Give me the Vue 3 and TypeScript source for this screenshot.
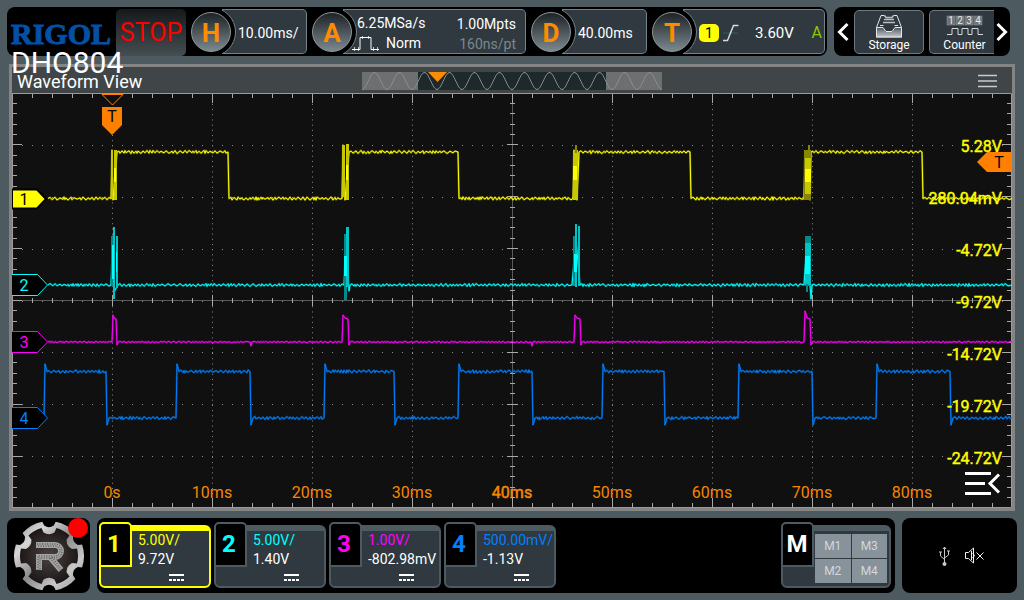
<script setup lang="ts">
type Point = [number, number]
interface Trace { name: string; color: string; d: string }
interface Bar { x: number; y: number; w: number; h: number; fill: string }

const X0 = 12
const X1 = 1012
const Y0 = 93
const Y1 = 508
const CX = 512
const CY = 300

// ---- graticule ----
const columns = [112, 212, 312, 412, 512, 612, 712, 812, 912]
const rows = [145, 197, 249, 301, 352, 404, 456]

function ticksPath(): string {
  let d = ''
  for (let i = 0; i < 50; i++) {
    const x = X0 + i * 20 + 0.5
    const major = i % 5 === 0
    const long = major ? 10 : 5
    const half = major ? 5 : 2
    d += `M${x} ${Y0}v${long}M${x} ${Y1}v${-long}M${x} ${CY - half}v${half * 2 + 1}`
  }
  for (let j = -20; j <= 20; j++) {
    const y = Math.round(CY + j * 10.38) + 0.5
    const major = j % 5 === 0
    const long = major ? 10 : 5
    const half = major ? 5 : 2
    d += `M${X0} ${y}h${long}M${X1} ${y}h${-long}M${CX - half} ${y}h${half * 2 + 1}`
  }
  return d
}
const ticks = ticksPath()

// ---- traces ----
function noiseSource(seed: number): () => number {
  let s = seed
  return () => {
    s = (s * 1103515245 + 12345) % 2147483648
    return s / 2147483648
  }
}

function toPath(nodes: Point[], amp: number, seed: number): string {
  const rnd = noiseSource(seed)
  let d = `M${nodes[0][0]} ${nodes[0][1]}`
  for (let i = 1; i < nodes.length; i++) {
    const [xa, ya] = nodes[i - 1]
    const [xb, yb] = nodes[i]
    if (ya === yb && xb - xa > 6) {
      let up = 1
      for (let x = xa + 2; x < xb - 1; x += 1 + Math.round(rnd() * 2)) {
        up = -up
        const y = ya + up * amp * (0.5 + rnd())
        d += `L${x} ${y.toFixed(1)}`
      }
    }
    d += `L${xb} ${yb}`
  }
  return d
}

const HI1 = 152
const LO1 = 198.5
const ch1: Point[] = [
  [48, LO1], [111, LO1], [112, 150], [113, 200], [117, HI1], [228, HI1], [229, LO1],
  [342, LO1], [343, 145], [345, 200], [349, HI1], [458, HI1], [459, LO1],
  [573, LO1], [574, 150], [577, 200], [579, HI1], [690, HI1], [691, LO1],
  [804, LO1], [805, 151], [810, 200], [811, HI1], [922, HI1], [923, LO1], [1012, LO1],
]
const B2 = 285
const ch2: Point[] = [
  [48, B2], [111, B2], [113, 236], [114, 292], [118, B2], [344, B2], [346, 240], [349, 291], [350, B2],
  [572, B2], [576, 240], [580, B2], [804, B2], [807, 240], [811, 299], [812, B2], [1012, B2],
]
const B3 = 342
const ch3: Point[] = [
  [48, B3], [112, B3], [113, 315], [114, 318], [116, 319], [117, 345], [118, B3],
  [249, B3], [250, B3], [251, 346], [252, B3],
  [342, B3], [343, 315], [345, 318], [348, 319], [349, 345], [350, B3],
  [531, B3], [532, 346], [533, B3], [574, B3], [575, 315], [577, 318], [580, 319], [581, 345], [582, B3],
  [804, B3], [805, 311], [807, 318], [810, 319], [811, 345], [812, B3], [1012, B3],
]
const HI4 = 371.5
const LO4 = 418
const ch4: Point[] = [[44, LO4]]
const edges: Point[] = [[44, 106], [176, 250], [324, 394], [458, 532], [602, 664], [738, 812], [876, 950]]
for (const [rise, fall] of edges) {
  ch4.push([rise, LO4], [rise + 1, 364], [rise + 3, HI4], [fall, HI4], [fall + 1, 425], [fall + 3, LO4])
}
ch4.push([1012, LO4])

const traces: Trace[] = [
  { name: 'ch1', color: '#ffff00', d: toPath(ch1, 1.1, 7) },
  { name: 'ch2', color: '#00ffff', d: toPath(ch2, 1, 31) },
  { name: 'ch3', color: '#ff00ff', d: toPath(ch3, 0.6, 101) },
  { name: 'ch4', color: '#0080ff', d: toPath(ch4, 1.1, 57) },
]

const YD = '#868600'
const YM = '#c8c800'
const YB = '#ffff00'
const CD = '#008a8a'
const CM = '#00c4c4'
const CB = '#00ffff'
const bars: Bar[] = [
  { x: 111, y: 150, w: 2, h: 49, fill: YM },
  { x: 114, y: 150, w: 3, h: 50, fill: YM },
  { x: 114, y: 168, w: 2, h: 14, fill: YB },
  { x: 342, y: 145, w: 3, h: 52, fill: YM },
  { x: 346, y: 144, w: 3, h: 56, fill: YM },
  { x: 346, y: 165, w: 2, h: 15, fill: YB },
  { x: 573, y: 150, w: 5, h: 50, fill: YM },
  { x: 575, y: 145, w: 2, h: 8, fill: YD },
  { x: 573, y: 166, w: 4, h: 14, fill: YB },
  { x: 804, y: 150, w: 7, h: 50, fill: YD },
  { x: 805, y: 158, w: 6, h: 36, fill: YM },
  { x: 805, y: 169, w: 6, h: 13, fill: YB },
  { x: 808, y: 145, w: 2, h: 6, fill: YD },
  { x: 111, y: 236, w: 3, h: 50, fill: CD },
  { x: 113, y: 227, w: 2, h: 72, fill: CM },
  { x: 112, y: 245, w: 2, h: 34, fill: CB },
  { x: 116, y: 236, w: 2, h: 52, fill: CM },
  { x: 116, y: 252, w: 1, h: 20, fill: CB },
  { x: 344, y: 234, w: 3, h: 66, fill: CD },
  { x: 346, y: 227, w: 3, h: 60, fill: CM },
  { x: 344, y: 256, w: 3, h: 20, fill: CB },
  { x: 573, y: 236, w: 2, h: 50, fill: CD },
  { x: 575, y: 224, w: 2, h: 63, fill: CM },
  { x: 578, y: 226, w: 2, h: 60, fill: CM },
  { x: 574, y: 254, w: 3, h: 18, fill: CB },
  { x: 805, y: 236, w: 6, h: 50, fill: CD },
  { x: 805, y: 243, w: 6, h: 42, fill: CM },
  { x: 805, y: 256, w: 5, h: 18, fill: CB },
  { x: 806, y: 284, w: 2, h: 8, fill: CD },
]

const timeLabels = columns.map((x, i) => ({ x, text: i === 0 ? '0s' : `${i * 10}ms`, center: x === CX }))
const voltLabels = ['5.28V', '280.04mV', '-4.72V', '-9.72V', '-14.72V', '-19.72V', '-24.72V']
  .map((text, i) => ({ text, y: 152 + i * 52 }))
const markers = [
  { n: 2, y: 285, color: '#00ffff' },
  { n: 3, y: 342, color: '#ff00ff' },
  { n: 4, y: 418, color: '#0080ff' },
]

// ---- overview strip ----
let overview = 'M0 18'
for (let x = 1; x <= 300; x++) {
  overview += `L${x} ${(9 - 8.5 * Math.cos(((x - 12.5) / 25) * Math.PI * 2)).toFixed(1)}`
}

// ---- gear emblem ----
function gear(outer: number, inner: number, half: number): string {
  const at = (r: number, deg: number) => {
    const a = (deg * Math.PI) / 180
    return `${(r * Math.cos(a)).toFixed(2)} ${(r * Math.sin(a)).toFixed(2)}`
  }
  let d = `M${at(outer, -half)}`
  for (let k = 0; k < 6; k++) {
    const c = k * 60
    d += `A${outer} ${outer} 0 0 1 ${at(outer, c + half)}`
    d += `L${at(inner + 2, c + half + 2)}`
    d += `Q${at(inner - 2, c + 30)} ${at(inner + 2, c + 58 - half)}`
    d += `L${at(outer, c + 60 - half)}`
  }
  return d + 'Z'
}
const gearOuter = gear(35, 29, 19)
const gearInner = gear(29, 22, 15)

const channels = [
  { n: 1, color: '#ffff00', scale: '5.00V/', offset: '9.72V', active: true },
  { n: 2, color: '#00ffff', scale: '5.00V/', offset: '1.40V', active: false },
  { n: 3, color: '#ff00ff', scale: '1.00V/', offset: '-802.98mV', active: false },
  { n: 4, color: '#0080ff', scale: '500.00mV/', offset: '-1.13V', active: false },
]
const mathCells = ['M1', 'M3', 'M2', 'M4']
</script>

<template>
  <main class="scope">
    <header class="top">
      <div class="bar settings">
        <div class="brand">
          <span class="logo">RIGOL</span>
          <span class="model">DHO804</span>
        </div>
        <button class="stop">STOP</button>
        <button class="group">
          <span class="knob">H</span>
          <span class="panel">10.00ms/</span>
        </button>
        <button class="group wide">
          <span class="knob">A</span>
          <span class="panel acquire">
            <span class="acq-col">
              <span>6.25MSa/s</span>
              <span class="mode">
                <svg width="28" height="16" viewBox="0 0 28 16" fill="none" stroke="#fff">
                  <path d="M0 14.500h8v-12h11v12h8" />
                  <path d="M2.500 12v4M6.500 12v4M10.500 1v3M16.500 1v3M21.500 12v4M25.500 12v4" stroke-opacity=".7" />
                </svg>
                <span>Norm</span>
              </span>
            </span>
            <span class="acq-col right">
              <span>1.00Mpts</span>
              <span class="dim">160ns/pt</span>
            </span>
          </span>
        </button>
        <button class="group">
          <span class="knob">D</span>
          <span class="panel">40.00ms</span>
        </button>
        <button class="group trig">
          <span class="knob">T</span>
          <span class="panel trigger">
            <span class="source">1</span>
            <svg width="18" height="18" viewBox="0 0 18 18" fill="none">
              <path d="M1 9h15" stroke="#2c6458" />
              <path d="M1 16.500h4.500L11.500 1.500h5" stroke="#d5dadc" stroke-width="1.500" />
            </svg>
            <span class="level">3.60V</span>
            <span class="auto">A</span>
          </span>
        </button>
      </div>

      <nav class="bar tools">
        <button class="arrow" aria-label="Previous">
          <svg width="12" height="20" viewBox="0 0 12 20" fill="none" stroke="#fff" stroke-width="3"><path d="M10.500 2L2.500 10l8 8" /></svg>
        </button>
        <button class="tool">
          <svg width="28" height="24" viewBox="0 0 28 24">
            <defs>
              <linearGradient id="tray" x1="0" y1="0" x2="0" y2="1">
                <stop offset="0" stop-color="#4e5558" /><stop offset=".3" stop-color="#7c8386" /><stop offset="1" stop-color="#c9cdcf" />
              </linearGradient>
            </defs>
            <path d="M1 14h7l3 4h6l3-4h7v9.500H1z" fill="url(#tray)" />
            <path d="M9.500 1.500H6L1.500 13.500V23h25v-9.500L22 1.500h-3.500M1.500 13.500H8l3 4h6l3-4h6.500M5 11.500h3.500M19.500 11.500H23" fill="none" stroke="#e4e6e7" />
            <path d="M9.500 1.500l1.500 2h6l1.500-2M9 5.500h10M8 8.500h12" fill="none" stroke="#b9bec0" stroke-width="1.500" />
          </svg>
          <span>Storage</span>
        </button>
        <button class="tool cut">
          <svg width="38" height="24" viewBox="0 0 38 24">
            <g class="digits">
              <g v-for="n in 4" :key="n">
                <rect :x="(n - 1) * 9 + 1" y="2" width="8" height="9" fill="#6d7275" stroke="#979da0" stroke-width=".5" />
                <text :x="(n - 1) * 9 + 5" y="10">{{ n }}</text>
              </g>
            </g>
            <path d="M1 20.500h5v-6h6v6h4v-6h6v6h4v-6h6v6h5" fill="none" stroke="#d5dadc" />
          </svg>
          <span>Counter</span>
        </button>
        <button class="arrow" aria-label="Next">
          <svg width="12" height="20" viewBox="0 0 12 20" fill="none" stroke="#fff" stroke-width="3"><path d="M1.500 2l8 8-8 8" /></svg>
        </button>
      </nav>
    </header>

    <section class="view">
      <div class="view-head">
        <h1>Waveform View</h1>
        <svg class="overview" width="300" height="18" viewBox="0 0 300 18">
          <rect width="300" height="18" fill="#6e6f6f" />
          <rect x="56" width="188" height="18" fill="#1e292b" />
          <path :d="overview" fill="none" stroke="#8d9090" />
          <path d="M66 0h19l-9.500 10z" fill="#ff8c00" />
        </svg>
        <button class="menu" aria-label="Menu">
          <svg width="20" height="14" viewBox="0 0 20 14" stroke="#c9cccd" stroke-width="1.500"><path d="M0 1.500h19M0 7h19M0 12.500h19" /></svg>
        </button>
      </div>

      <svg class="plot" viewBox="12 93 1000 415">
        <rect x="12" y="93" width="1000" height="415" fill="#101010" />
        <g class="dots">
          <path v-for="x in columns" :key="'c' + x" :d="`M${x + 0.5} 93.500V508`" stroke-dasharray="1 4.190" />
          <path v-for="y in rows" :key="'r' + y" :d="`M12 ${y + 0.5}H1012`" stroke-dasharray="1 9" />
        </g>
        <path d="M512.500 93v415M12 300.500h1000" stroke="#5c5c5c" />
        <path :d="ticks" stroke="#a8a8a8" />
        <path d="M12.500 93.500h999v414h-999z" fill="none" stroke="#9a9a9a" />

        <g class="times">
          <text v-for="t in timeLabels" :key="t.x" :x="t.x" y="498" :class="{ mid: t.center }">{{ t.text }}</text>
        </g>

        <g v-for="t in traces" :key="t.name" fill="none" :stroke="t.color" stroke-linejoin="round">
          <path :d="t.d" stroke-width="2" stroke-opacity=".4" />
          <path :d="t.d" />
        </g>
        <rect v-for="(b, i) in bars" :key="i" :x="b.x" :y="b.y" :width="b.w" :height="b.h" :fill="b.fill" />

        <g class="volts">
          <text v-for="v in voltLabels" :key="v.text" x="1002" :y="v.y">{{ v.text }}</text>
        </g>

        <path d="M12 189.500h25l9 9.500-9 9.500H12z" fill="#ff0" stroke="#000" stroke-width="2" />
        <text class="mark" x="24" y="205" fill="#000">1</text>
        <g v-for="m in markers" :key="m.n">
          <path :d="`M12 ${m.y - 10.5}h25.500l10 10.500-10 10.500H12`" fill="#000" :stroke="m.color" />
          <text class="mark" x="24" :y="m.y + 6" :fill="m.color">{{ m.n }}</text>
        </g>

        <path d="M102 94.500h21l-10.500 10.500z" fill="#101010" stroke="#ff8000" />
        <path d="M102 107h20v18l-10 10-10-10z" fill="#ff8000" />
        <text class="mark" x="112" y="122" fill="#000">T</text>
        <path d="M1012 152h-25l-10 10 10 10h25z" fill="#ff8000" />
        <text class="mark" x="999" y="168" fill="#000">T</text>

        <path d="M965 473.500h26M965 483.500h20M965 493.500h26M999 474.500l-9 9 9 9" fill="none" stroke="#fff" stroke-width="3" />
      </svg>
    </section>

    <footer class="bottom">
      <button class="bar home" aria-label="Home">
        <svg width="72" height="72" viewBox="-36 -36 72 72">
          <defs>
            <linearGradient id="steel" x1="0" y1="0" x2="1" y2="1">
              <stop offset="0" stop-color="#8f8f8f" /><stop offset=".25" stop-color="#d6d6d6" />
              <stop offset=".5" stop-color="#8a8a8a" /><stop offset=".75" stop-color="#c9c9c9" />
              <stop offset="1" stop-color="#8f8f8f" />
            </linearGradient>
            <radialGradient id="core"><stop offset="0" stop-color="#4a4341" /><stop offset="1" stop-color="#1d1817" /></radialGradient>
          </defs>
          <path :d="gearOuter" fill="url(#steel)" />
          <path :d="gearInner" fill="url(#core)" />
          <g fill="none" stroke="#a3a3a3" stroke-width="6">
            <path d="M-13-11H6a6 6 0 0 1 0 12H-10V14" />
            <path d="M1 1L12 14" />
          </g>
          <g fill="none" stroke="#3c3c3c" stroke-dasharray="1 1.500">
            <path d="M-12-12H6a7 7 0 0 1 0 14H-9V14M1 2L11 14" />
            <path d="M-11-10H6a5 5 0 0 1 0 10H-11V14M3 1L13 14" />
          </g>
        </svg>
        <span class="alert"></span>
      </button>

      <div class="bar channels">
        <button v-for="c in channels" :key="c.n" class="card" :class="[`ch${c.n}`, { active: c.active }]">
          <span class="tab">{{ c.n }}</span>
          <span class="body">
            <span class="scale">{{ c.scale }}</span>
            <span class="offset">{{ c.offset }}</span>
            <svg class="dc" width="16" height="8" viewBox="0 0 16 8" stroke="#fff" stroke-width="2">
              <path d="M0 1h15" /><path d="M0 6h15" stroke-dasharray="3 1" />
            </svg>
          </span>
        </button>
        <div class="card math">
          <span class="tab">M</span>
          <div class="body cells">
            <button v-for="m in mathCells" :key="m">{{ m }}</button>
          </div>
        </div>
      </div>

      <div class="bar status">
        <svg width="12" height="20" viewBox="0 0 12 20" fill="none" stroke="#c9c9c9">
          <path d="M5.500 1v17M1.500 6v4l4 3.500M9.500 5v4l-4 3" />
          <path d="M4 3l1.500-2L7 3M0 6h3M8 5h3" />
          <circle cx="5.500" cy="18" r="2" fill="#c9c9c9" stroke="none" />
        </svg>
        <svg width="20" height="17" viewBox="0 0 20 17" fill="none" stroke="#f0f0f0">
          <path d="M1.500 5.500h3L9.500 1v15L4.500 11.500h-3z" /><path d="M7.500 4v9M8.500 6l2 2.500-2 2.500" />
          <path d="M12.500 5.500l7 7M19.500 5.500l-7 7" />
        </svg>
      </div>
    </footer>
  </main>
</template>

<style>
body { background: #4d5a5f; }
</style>

<style scoped>
.scope {
  box-sizing: border-box;
  min-height: 100vh;
  display: flex;
  flex-direction: column;
  background: #4d5a5f;
  color: #fff;
  font-family: Roboto, "Liberation Sans", sans-serif;
  font-size: 14px;
}
button {
  font: inherit;
  color: inherit;
  background: none;
  border: 0;
  padding: 0;
  margin: 0;
}
svg { display: block; flex: none; }
.bar { background: #000; border-radius: 8px; }

.top {
  position: relative;
  z-index: 2;
  display: flex;
  gap: 7px;
  padding: 7px 14px 8px 7px;
}
.settings {
  flex: 1;
  display: flex;
  gap: 5px;
  height: 49px;
  padding: 0 2px 0 4px;
  box-sizing: border-box;
}
.brand { position: relative; flex: 0 0 100px; min-width: 0; }
.logo {
  display: block;
  margin-top: 9px;
  font: bold 30px/35px "Liberation Serif", serif;
  color: #0350a5;
  -webkit-text-stroke: 1px #0350a5;
}
.model {
  position: absolute;
  left: 0;
  top: 41px;
  font-size: 30px;
  line-height: 30px;
}
.stop {
  flex: 0 0 70px;
  margin-top: 2px;
  border-radius: 5px;
  background: linear-gradient(#15191b, #454e52);
  color: #f00;
  font-size: 25px;
  line-height: 47px;
}
.group {
  flex: 116 1 116px;
  display: flex;
  align-items: center;
  text-align: left;
}
.group.wide { flex: 214 1 214px; }
.group.trig { flex: 173 1 173px; }
.knob {
  position: relative;
  z-index: 1;
  flex: none;
  box-sizing: border-box;
  width: 40px;
  height: 40px;
  margin-right: -9px;
  border: 1px solid #8b969b;
  border-radius: 50%;
  background: linear-gradient(#1d2225, #7c898f);
  color: #ff8c00;
  font-weight: 700;
  font-size: 26px;
  line-height: 40px;
  text-align: center;
}
.panel {
  position: relative;
  overflow: hidden;
  flex: 1;
  display: flex;
  align-items: center;
  box-sizing: border-box;
  height: 45px;
  padding: 2px 0 0 16px;
  border: 1px solid #74828a;
  border-left: 0;
  border-radius: 0 5px 5px 0;
  background: #2f393f;
}
.panel::before {
  content: "";
  position: absolute;
  left: -36px;
  top: -3px;
  box-sizing: border-box;
  width: 50px;
  height: 50px;
  border: 1px solid #74828a;
  border-radius: 50%;
  background: #000;
}
.panel > * { position: relative; }
.acquire { justify-content: space-between; padding: 2px 9px 0 9px; }
.acq-col { display: flex; flex-direction: column; line-height: 20px; }
.acq-col > span:first-child { padding-left: 5px; }
.mode { display: flex; align-items: center; gap: 6px; }
.right { text-align: right; padding-top: 3px; }
.dim { color: #7c878d; }
.trigger { gap: 3px; padding-right: 2px; }
.source {
  width: 20px;
  height: 18px;
  border-radius: 5px;
  background: #ff0;
  color: #000;
  line-height: 18px;
  text-align: center;
}
.level { font-size: 15px; margin-left: 12px; }
.auto { margin-left: auto; font-size: 16px; color: #8cc800; }

.tools {
  display: flex;
  align-items: center;
  gap: 5px;
  height: 49px;
  padding: 0 2px;
}
.arrow { width: 13px; display: flex; justify-content: center; }
.tool {
  box-sizing: border-box;
  width: 70px;
  height: 44px;
  display: flex;
  flex-direction: column;
  align-items: center;
  justify-content: flex-end;
  border: 1px solid #6d7a80;
  border-radius: 5px;
  background: #2f393f;
  font-size: 12px;
  line-height: 15px;
}
.tool.cut { width: 65px; padding-left: 5px; border-right: 0; border-radius: 5px 0 0 5px; }
.tool.cut + .arrow { margin-left: -4px; }
.digits text {
  font: 10px Roboto, sans-serif;
  fill: #e8e8e8;
  text-anchor: middle;
}

.view { margin: 0 9px; border: 3px solid #848484; }
.view-head {
  display: grid;
  grid-template-columns: 1fr auto 1fr;
  align-items: center;
  height: 26px;
  padding: 0 14px 0 5px;
  background: #404547;
}
h1 { margin: 0; font-size: 18px; font-weight: 400; line-height: 26px; padding-top: 2px; }
.overview { margin-left: 9px; }
.menu { justify-self: end; }
.plot { width: 100%; height: auto; }
.dots path { stroke: #8c8c8c; }
.plot text { font-family: Roboto, sans-serif; font-size: 16px; }
.times text { fill: #f58600; text-anchor: middle; }
.times .mid { stroke: #f58600; stroke-width: 0.5px; }
.volts text { fill: #ff0; stroke: #ff0; stroke-width: 0.4px; text-anchor: end; }
.mark { text-anchor: middle; }

.bottom {
  display: grid;
  grid-template-columns: 83px 1fr 115px;
  gap: 7px;
  padding: 7px;
}
.bottom .bar { height: 75px; box-sizing: border-box; }
.home { position: relative; display: flex; align-items: center; justify-content: center; }
.alert {
  position: absolute;
  top: 0;
  right: 2px;
  width: 20px;
  height: 20px;
  border-radius: 50%;
  background: #f00;
}
.channels { display: flex; gap: 3px; padding: 4px 4px 5px 2px; }
.card { --edge: #4d5a60; position: relative; width: 112px; text-align: left; }
.card.active { --edge: #ff0; }
.card.math { width: 110px; margin-left: auto; }
.tab {
  position: absolute;
  left: 0;
  top: 0;
  box-sizing: border-box;
  width: 33px;
  height: 45px;
  padding-right: 3px;
  border: 2px solid var(--edge);
  border-radius: 5px 5px 0 0;
  background: #000;
  font-weight: 700;
  font-size: 24px;
  line-height: 40px;
  text-align: center;
}
.math .tab { padding-right: 1px; }
.body {
  display: flex;
  flex-direction: column;
  box-sizing: border-box;
  height: 63px;
  margin-top: 3px;
  padding-left: 37px;
  border: 2px solid var(--edge);
  border-top-width: 6px;
  border-radius: 6px;
  background: #2f393f;
  line-height: 19px;
  white-space: nowrap;
}
.dc { margin: 5px 0 0 31px; }
.ch1 .scale, .ch1 .tab { color: #ff0; }
.ch2 .scale, .ch2 .tab { color: #0ff; }
.ch3 .scale, .ch3 .tab { color: #f0f; }
.ch4 .scale, .ch4 .tab { color: #0080ff; }
.cells {
  display: grid;
  grid-template-columns: 1fr 1fr;
  gap: 1px;
  padding: 3px 2px 3px 32px;
}
.cells button { background: #87929a; color: #d3d8db; font-size: 12px; line-height: 23px; }
.status { display: flex; align-items: center; justify-content: center; gap: 13px; padding-left: 3px; }
</style>
